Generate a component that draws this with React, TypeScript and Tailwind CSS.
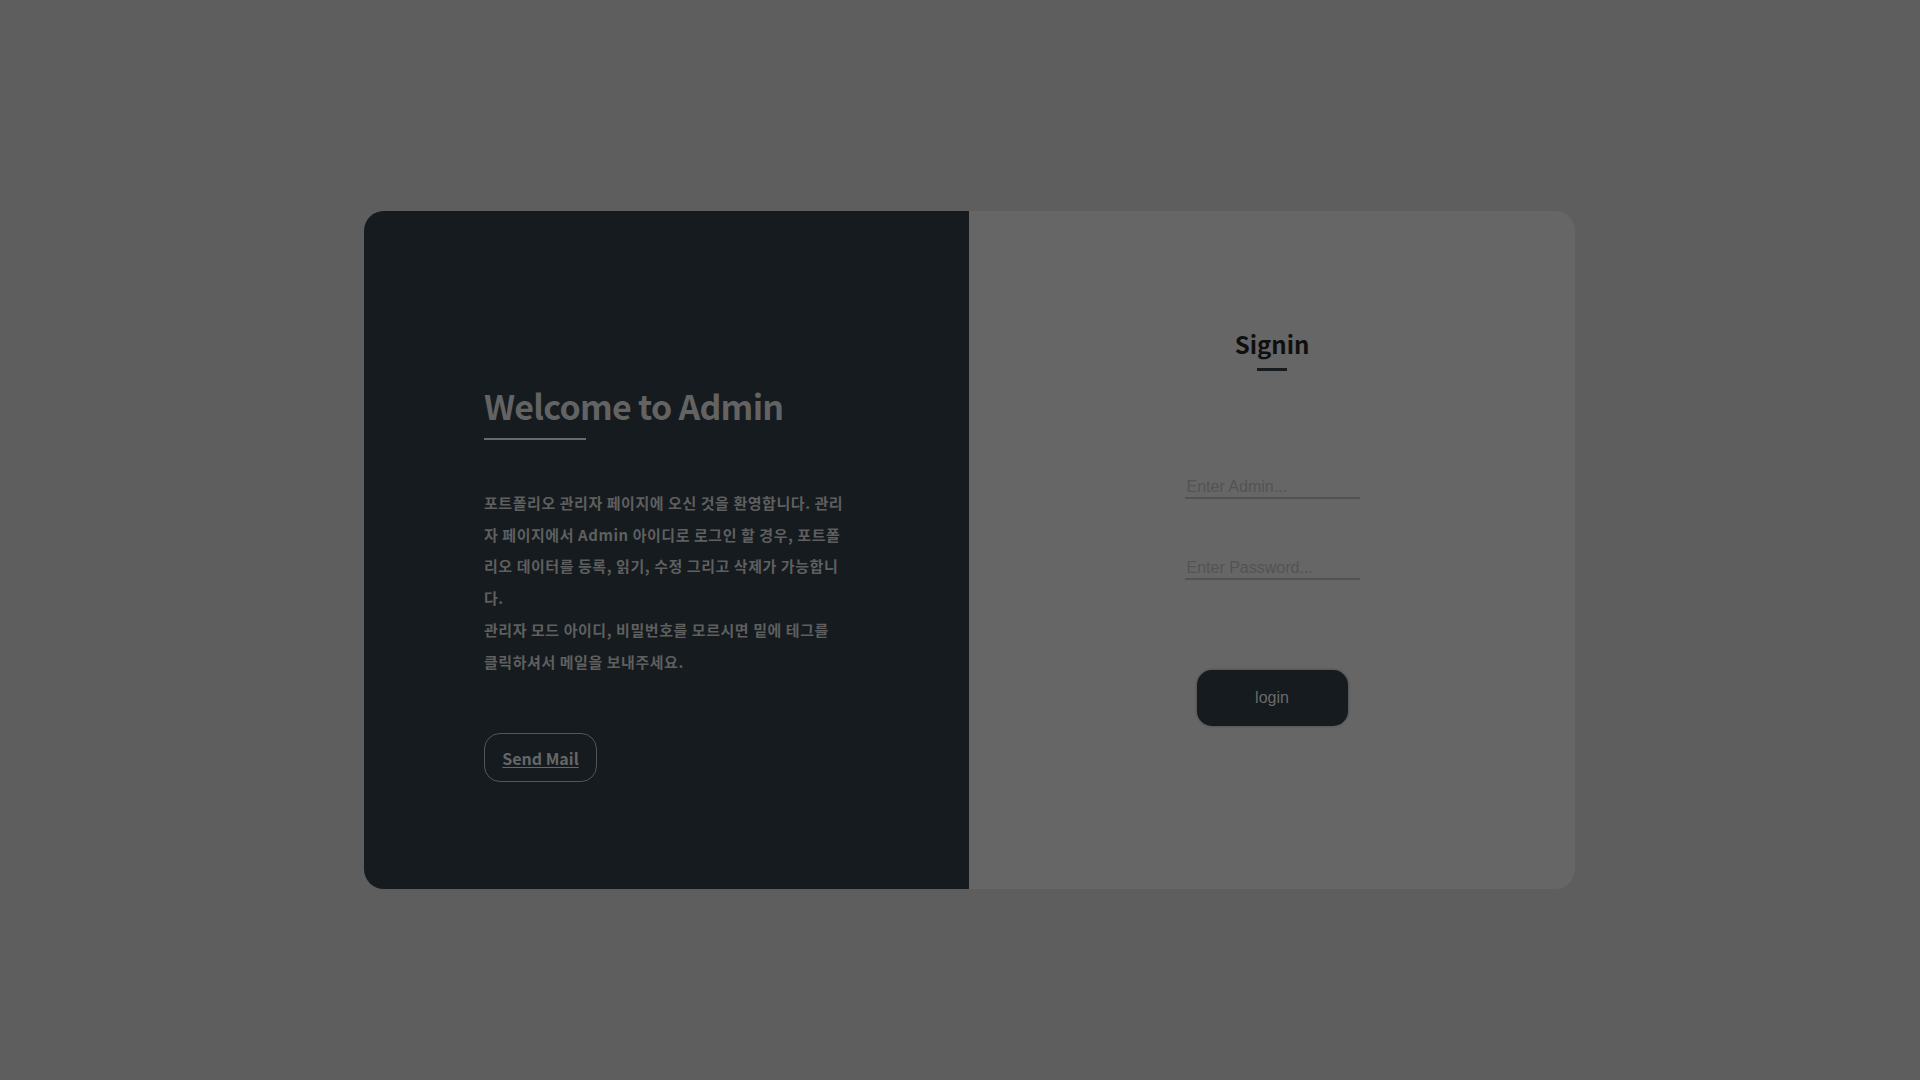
import React from "react";

const introLines = [
  "포트폴리오 관리자 페이지에 오신 것을 환영합니다. 관리",
  "자 페이지에서 Admin 아이디로 로그인 할 경우, 포트폴",
  "리오 데이터를 등록, 읽기, 수정 그리고 삭제가 가능합니",
  "다.",
  "관리자 모드 아이디, 비밀번호를 모르시면 밑에 테그를",
  "클릭하셔서 메일을 보내주세요.",
];

const App: React.FC = () => {
  return (
    <div className="min-h-screen bg-[#5e5e5e] pt-[211px] pl-[364px] font-['Noto_Sans_CJK_KR',sans-serif]">
      <div className="flex w-[1211px] h-[678px] rounded-[20px] overflow-hidden">
        <section className="w-[605px] bg-[#151b1e] pl-[120px] pt-[173px]">
          <h1 className="text-[34px] leading-[44px] tracking-[-0.75px] font-bold text-[#636363]">
            Welcome to Admin
          </h1>
          <div className="mt-[10px] w-[102px] h-[2px] bg-[#6a6a6a]" />
          <p className="mt-[47px] text-[15px] leading-[31.7px] tracking-[0.55px] font-bold text-[#5f5f5f]">
            {introLines.map((line) => (
              <span key={line} className="block whitespace-nowrap">
                {line}
              </span>
            ))}
          </p>
          <button className="mt-[56px] w-[113px] h-[49px] rounded-[16px] border border-[#555555] text-[16px] font-bold text-[#666666] underline underline-offset-2">
            Send Mail
          </button>
        </section>
        <section className="flex-1 bg-[#666666] flex flex-col items-center pt-[117px]">
          <h2 className="text-[24px] leading-[32px] font-bold text-[#0f0f0f]">
            Signin
          </h2>
          <div className="mt-[8px] w-[30px] h-[3px] bg-[#151b1e]" />
          <input
            type="text"
            placeholder="Enter Admin..."
            className="mt-[106px] w-[175px] h-[22px] px-[2px] bg-transparent border-b-2 border-[#525252] outline-none text-[16px] font-['Liberation_Sans',Arial,sans-serif] text-[#222] placeholder:text-[#535353]"
          />
          <input
            type="password"
            placeholder="Enter Password..."
            className="mt-[59px] w-[175px] h-[22px] px-[2px] bg-transparent border-b-2 border-[#525252] outline-none text-[16px] font-['Liberation_Sans',Arial,sans-serif] text-[#222] placeholder:text-[#535353]"
          />
          <button className="mt-[90px] w-[151px] h-[56px] rounded-[15px] bg-[#151b1e] shadow-[0_0_3px_rgba(0,0,0,0.35)] text-[16px] text-[#6a6a6a] font-['Liberation_Sans',Arial,sans-serif]">
            login
          </button>
        </section>
      </div>
    </div>
  );
};

export default App;
